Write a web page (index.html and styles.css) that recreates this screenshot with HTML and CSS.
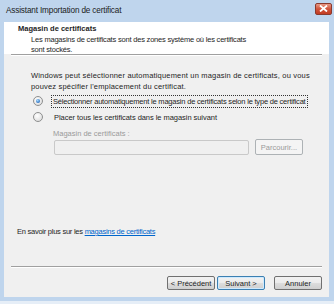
FILE: index.html
```html
<!DOCTYPE html>
<html lang="fr">
<head>
    <meta charset="UTF-8">
    <title>Assistant Importation de certificat</title>
    <link rel="stylesheet" href="styles.css">
</head>
<body>
    <div class="window">
        <div class="titlebar">
            <span class="title">Assistant Importation de certificat</span>
            <span class="close">
                <svg width="9" height="7" viewBox="0 0 9 7"><path d="M1 0.5 L8 6.5 M8 0.5 L1 6.5" stroke="#fff" stroke-width="1.8"/></svg>
            </span>
        </div>
        <div class="client">
            <div class="header">
                <div class="header-title">Magasin de certificats</div>
                <div class="header-desc">Les magasins de certificats sont des zones système où les certificats<br>sont stockés.</div>
            </div>
            <div class="rule"></div>

            <div class="content">
                <p class="intro">Windows peut sélectionner automatiquement un magasin de certificats, ou vous<br>pouvez spécifier l'emplacement du certificat.</p>

                <div class="option">
                    <span class="radio checked"></span>
                    <span class="label focused">Sélectionner automatiquement le magasin de certificats selon le type de certificat</span>
                </div>
                <div class="option">
                    <span class="radio"></span>
                    <span class="label">Placer tous les certificats dans le magasin suivant</span>
                </div>

                <div class="store">
                    <div class="store-label">Magasin de certificats :</div>
                    <div class="store-row">
                        <div class="textbox"></div>
                        <div class="btn disabled">Parcourir...</div>
                    </div>
                </div>
            </div>

            <div class="more">En savoir plus sur les <a href="#">magasins de certificats</a></div>

            <div class="rule"></div>
            <div class="footer">
                <div class="btn">&lt; Précédent</div>
                <div class="btn default">Suivant &gt;</div>
                <div class="btn cancel">Annuler</div>
            </div>
        </div>
    </div>
</body>
</html>
```

FILE: styles.css
```css
html, body {
    margin: 0;
    padding: 0;
}

body {
    width: 334px;
    height: 304px;
    background-color: #e6eef7;
    font-family: "Liberation Sans", Arial, sans-serif;
    font-size: 7.5px;
    color: #1e1e1e;
    overflow: hidden;
}

.window {
    width: 334px;
    height: 301px;
    box-sizing: border-box;
    background-color: #bfd5ed;
    padding: 0 5px 4px 4px;
    display: flex;
    flex-direction: column;
}

.titlebar {
    height: 22px;
    display: flex;
    align-items: center;
    justify-content: space-between;
}

.title {
    font-size: 8.2px;
    letter-spacing: -0.15px;
    color: #1b1b1b;
    padding-left: 2px;
    margin-top: -1px;
}

.close {
    width: 17px;
    height: 12px;
    margin-top: -5px;
    margin-right: -3px;
    box-sizing: border-box;
    border: 1px solid #8a3a2e;
    border-radius: 2px;
    background: linear-gradient(#e89a86, #d0533a 50%, #c23c23);
    display: flex;
    align-items: center;
    justify-content: center;
}

.client {
    flex: 1;
    background-color: #f0f0f0;
    display: flex;
    flex-direction: column;
}

.header {
    background-color: #fff;
    height: 32px;
    box-sizing: border-box;
    padding: 2px 0 0 14px;
}

.header-title {
    font-weight: bold;
    line-height: 10px;
}

.header-desc {
    padding-left: 13px;
    margin-top: 1px;
    line-height: 10px;
    letter-spacing: -0.2px;
}

.rule {
    margin: 0 7px;
    height: 0;
    border-top: 1px solid #a0a0a0;
    border-bottom: 1px solid #fff;
}

.content {
    padding: 14px 0 0 27px;
}

.intro {
    margin: 0;
    line-height: 11px;
    letter-spacing: 0.18px;
}

.option {
    display: flex;
    align-items: center;
    height: 12px;
    margin-top: 4px;
}

.intro + .option {
    margin-top: 3px;
}

.radio {
    width: 8px;
    height: 8px;
    margin-left: 2px;
    border: 1px solid #8e8f8f;
    border-radius: 50%;
    background: radial-gradient(circle at 40% 35%, #ffffff, #e2e2e2 70%);
    position: relative;
}

.radio.checked::after {
    content: "";
    position: absolute;
    left: 2px;
    top: 2px;
    width: 4px;
    height: 4px;
    border-radius: 50%;
    background: radial-gradient(circle at 40% 35%, #a7dbff, #1d63b8 80%);
}

.label {
    margin-left: 10px;
    padding: 1px 1px;
    letter-spacing: -0.05px;
}

.label.focused {
    margin-left: 9px;
    outline: 1px dotted #333;
    letter-spacing: -0.2px;
}

.store {
    padding: 6px 0 0 22px;
    color: #9a9a9a;
}

.store-label {
    line-height: 10px;
}

.store-row {
    display: flex;
    align-items: center;
}

.textbox {
    width: 195px;
    height: 15px;
    box-sizing: border-box;
    border: 1px solid #c9c9c9;
    border-radius: 2px;
    background-color: #f0f0f0;
    margin-left: 1px;
}

.btn {
    height: 14px;
    box-sizing: border-box;
    border: 1px solid #707070;
    border-radius: 2px;
    background: linear-gradient(#f2f2f2, #ebebeb 50%, #dddddd 51%, #cfcfcf);
    display: flex;
    align-items: center;
    justify-content: center;
    color: #1e1e1e;
    width: 48px;
}

.btn.disabled {
    margin-left: 6px;
    height: 16px;
    border-color: #adb2b5;
    background: #f4f4f4;
    color: #9a9a9a;
}

.more {
    margin-top: auto;
    margin-bottom: 30px;
    padding-left: 13px;
    letter-spacing: -0.25px;
}

.more a {
    color: #0066cc;
    text-decoration: underline;
}

.footer {
    display: flex;
    justify-content: flex-end;
    gap: 2px;
    padding: 8px 7px 7px 0;
}

.btn.default {
    border-color: #3c7fb1;
    box-shadow: inset 0 0 0 1px #cdeaff;
}

.btn.cancel {
    margin-left: 7px;
}
```
